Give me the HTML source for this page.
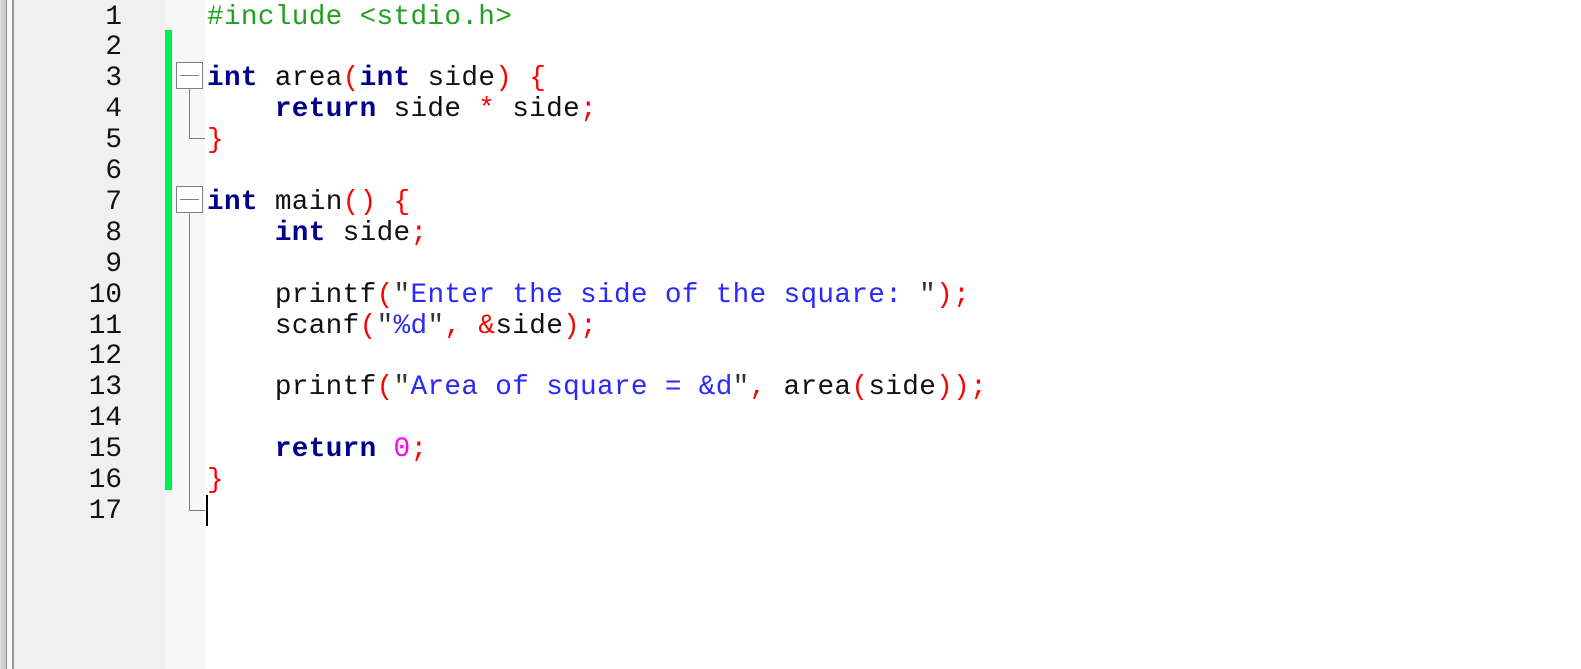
<!DOCTYPE html>
<html><head><meta charset="utf-8"><style>
html,body{margin:0;padding:0;width:1581px;height:669px;overflow:hidden;background:#fff;position:relative}
.l{position:absolute;top:0;height:669px}
#nums{position:absolute;left:14px;top:0;width:151px;height:669px;background:#f0f0f0}
#fold{position:absolute;left:165px;top:0;width:40px;height:669px;background:#f7f7f7}
.row{position:absolute;height:30.7px;line-height:30.7px;font-family:"Liberation Mono","Courier New",monospace;font-size:27.7px;letter-spacing:0.34px;white-space:pre;color:#111}
.n{left:14px;width:108px;text-align:right;color:#111;letter-spacing:0}
.c{left:207px}
.k{color:#00008b;font-weight:bold}
.p{color:#ff0000}
.s{color:#2828ff}
.q{color:#333}
.num{color:#ff00ff}
.pp{color:#22a022}
.green{position:absolute;left:165px;top:30px;width:7px;height:460px;background:#00f050}
.box{position:absolute;left:176px;width:25px;height:25px;border:1px solid #808080;background:#fff}
.box:after{content:"";position:absolute;left:3px;right:3px;top:12px;height:1px;background:#808080}
.v{position:absolute;left:189px;width:1px;background:#808080}
.h{position:absolute;left:189px;height:1px;background:#808080}
</style></head><body>
<div class="l" style="left:0;width:1px;background:#e4e4e4"></div>
<div class="l" style="left:1px;width:5px;background:#cfcfcf"></div>
<div class="l" style="left:6px;width:1px;background:#8a8a8a"></div>
<div class="l" style="left:7px;width:5px;background:#fbfbfb"></div>
<div class="l" style="left:12px;width:2px;background:#9a9a9a"></div>
<div id="nums"></div>
<div id="fold"></div>
<div class="green"></div>

<div class="v" style="top:89px;height:49px"></div>
<div class="h" style="top:138px;width:16px"></div>
<div class="box" style="top:62px"></div>
<div class="v" style="top:212px;height:298px"></div>
<div class="h" style="top:510px;width:16px"></div>
<div class="box" style="top:186px"></div>
<div style="position:absolute;left:206px;top:495px;width:2px;height:31px;background:#000"></div>

<div class="row n" style="top:2.5px">1</div>
<div class="row n" style="top:33.4px">2</div>
<div class="row n" style="top:64.3px">3</div>
<div class="row n" style="top:95.2px">4</div>
<div class="row n" style="top:126.1px">5</div>
<div class="row n" style="top:157px">6</div>
<div class="row n" style="top:187.9px">7</div>
<div class="row n" style="top:218.8px">8</div>
<div class="row n" style="top:249.7px">9</div>
<div class="row n" style="top:280.6px">10</div>
<div class="row n" style="top:311.5px">11</div>
<div class="row n" style="top:342.4px">12</div>
<div class="row n" style="top:373.3px">13</div>
<div class="row n" style="top:404.2px">14</div>
<div class="row n" style="top:435.1px">15</div>
<div class="row n" style="top:466px">16</div>
<div class="row n" style="top:496.9px">17</div>

<div class="row c pp" style="top:2.5px">#include &lt;stdio.h&gt;</div>
<div class="row c" style="top:64.3px"><span class="k">int</span> area<span class="p">(</span><span class="k">int</span> side<span class="p">)</span> <span class="p">{</span></div>
<div class="row c" style="top:95.2px">    <span class="k">return</span> side <span class="p">*</span> side<span class="p">;</span></div>
<div class="row c" style="top:126.1px"><span class="p">}</span></div>
<div class="row c" style="top:187.9px"><span class="k">int</span> main<span class="p">()</span> <span class="p">{</span></div>
<div class="row c" style="top:218.8px">    <span class="k">int</span> side<span class="p">;</span></div>
<div class="row c" style="top:280.6px">    printf<span class="p">(</span><span class="q">"</span><span class="s">Enter the side of the square: </span><span class="q">"</span><span class="p">);</span></div>
<div class="row c" style="top:311.5px">    scanf<span class="p">(</span><span class="q">"</span><span class="s">%d</span><span class="q">"</span><span class="p">,</span> <span class="p">&amp;</span>side<span class="p">);</span></div>
<div class="row c" style="top:373.3px">    printf<span class="p">(</span><span class="q">"</span><span class="s">Area of square = &amp;d</span><span class="q">"</span><span class="p">,</span> area<span class="p">(</span>side<span class="p">));</span></div>
<div class="row c" style="top:435.1px">    <span class="k">return</span> <span class="num">0</span><span class="p">;</span></div>
<div class="row c" style="top:466px"><span class="p">}</span></div>
</body></html>
